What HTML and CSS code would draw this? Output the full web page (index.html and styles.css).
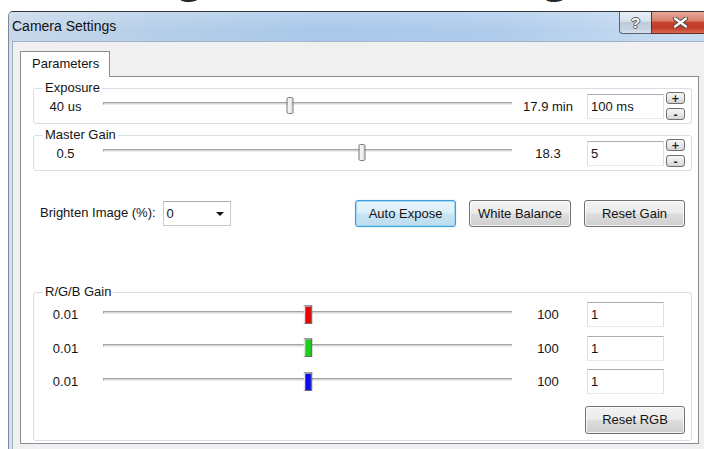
FILE: index.html
```html
<!DOCTYPE html>
<html lang="en">
<head>
<meta charset="utf-8">
<title>Camera Settings</title>
<link rel="stylesheet" href="styles.css">
</head>
<body>
<h1 class="page-heading"><span class="page-heading-text">Editing Camera Settings</span></h1>

<div class="window">
  <div class="titlebar">
    <span class="title">Camera Settings</span>
    <div class="caption-buttons">
      <button class="cap-btn cap-help" type="button">?</button>
      <button class="cap-btn cap-close" type="button" aria-label="Close">
        <svg width="17" height="11" viewBox="0 0 17 11">
          <path d="M3 1.5 L14 9.5 M14 1.5 L3 9.5" stroke="#4a4a4a" stroke-width="4.2" stroke-linecap="round" fill="none"/>
          <path d="M3 1.5 L14 9.5 M14 1.5 L3 9.5" stroke="#ffffff" stroke-width="2.2" stroke-linecap="round" fill="none"/>
        </svg>
      </button>
    </div>
  </div>

  <div class="client">
    <div class="tab-strip">
      <div class="tab is-active">Parameters</div>
    </div>

    <div class="tab-panel">
      <fieldset class="group">
        <legend>Exposure</legend>
        <div class="slider-row">
          <span class="min">40 us</span>
          <div class="slider"><div class="channel"></div><div class="thumb" style="left:45.7%"></div></div>
          <span class="max">17.9 min</span>
          <input class="textbox" type="text" value="100 ms">
          <div class="spin"><button type="button">+</button><button type="button">-</button></div>
        </div>
      </fieldset>

      <fieldset class="group">
        <legend>Master Gain</legend>
        <div class="slider-row">
          <span class="min">0.5</span>
          <div class="slider"><div class="channel"></div><div class="thumb" style="left:63.3%"></div></div>
          <span class="max">18.3</span>
          <input class="textbox" type="text" value="5">
          <div class="spin"><button type="button">+</button><button type="button">-</button></div>
        </div>
      </fieldset>

      <div class="action-row">
        <label class="brighten-label">Brighten Image (%):</label>
        <div class="combo"><span class="combo-value">0</span><span class="combo-arrow"></span></div>
        <div class="action-buttons">
          <button class="btn is-focused" type="button">Auto Expose</button>
          <button class="btn btn-wide" type="button">White Balance</button>
          <button class="btn" type="button">Reset Gain</button>
        </div>
      </div>

      <fieldset class="group group-rgb">
        <legend>R/G/B Gain</legend>
        <div class="slider-row rgb-row">
          <span class="min">0.01</span>
          <div class="slider"><div class="channel"></div><div class="thumb thumb-color thumb-red" style="left:50%"></div></div>
          <span class="max">100</span>
          <input class="textbox" type="text" value="1">
        </div>
        <div class="slider-row rgb-row">
          <span class="min">0.01</span>
          <div class="slider"><div class="channel"></div><div class="thumb thumb-color thumb-green" style="left:50%"></div></div>
          <span class="max">100</span>
          <input class="textbox" type="text" value="1">
        </div>
        <div class="slider-row rgb-row">
          <span class="min">0.01</span>
          <div class="slider"><div class="channel"></div><div class="thumb thumb-color thumb-blue" style="left:50%"></div></div>
          <span class="max">100</span>
          <input class="textbox" type="text" value="1">
        </div>
        <button class="btn btn-reset-rgb" type="button">Reset RGB</button>
      </fieldset>
    </div>
  </div>
</div>
</body>
</html>
```

FILE: styles.css
```css
* { box-sizing: border-box; }

html, body {
  margin: 0;
  padding: 0;
  background: #ffffff;
  overflow: hidden;
}

body {
  width: 704px;
  height: 449px;
  font-family: "Liberation Sans", Arial, sans-serif;
  font-size: 13px;
  color: #141414;
}

.page-heading {
  margin: 0;
  height: 11px;
  padding-left: 49px;
  overflow: hidden;
  font: bold 39px/39px "DejaVu Sans", sans-serif;
  word-spacing: 5px;
  color: #262626;
  white-space: nowrap;
}
.page-heading-text {
  display: block;
  margin-top: -39px;
}

/* ---------- window frame ---------- */
.window {
  margin-left: 8px;
  width: 702px;
  height: 438px;
  border-top: 1px solid #2f3539;
  border-left: 1px solid #7d8998;
  border-top-left-radius: 5px;
  background: #d3e0ee;
  display: flex;
  flex-direction: column;
  overflow: hidden;
}

.titlebar {
  height: 29px;
  flex: none;
  display: flex;
  align-items: flex-start;
  padding-left: 3px;
  background:
    linear-gradient(180deg, rgba(255,255,255,0.18) 0%, rgba(255,255,255,0) 60%),
    linear-gradient(90deg, #c8d8ea 0%, #b6cfe9 20%, #a9c8ea 45%, #b0ccec 70%, #cadef2 100%);
}

.title {
  padding-top: 6px;
  font-size: 14px;
  line-height: 16px;
  color: #101010;
}

.caption-buttons {
  margin-left: auto;
  display: flex;
}

.cap-btn {
  height: 22px;
  margin: 0;
  padding: 0;
  border: 1px solid #59636f;
  border-top: 0;
  display: flex;
  align-items: center;
  justify-content: center;
  font-family: "Liberation Sans", Arial, sans-serif;
}

.cap-help {
  width: 32px;
  border-right: 0;
  border-bottom-left-radius: 4px;
  background: linear-gradient(180deg, #e9eff6 0%, #d6e0ec 45%, #bccadb 50%, #c8d5e4 85%, #d9e4f0 100%);
  font-weight: bold;
  font-size: 15px;
  line-height: 16px;
  color: #ffffff;
  text-shadow: -1px 0 #555, 1px 0 #555, 0 -1px #555, 0 1px #555;
}

.cap-close {
  width: 59px;
  border-color: #6b2b22;
  background: linear-gradient(180deg, #e6a898 0%, #d88470 40%, #c6432f 50%, #c23d29 75%, #d46a52 100%);
}

/* ---------- client area ---------- */
.client {
  flex: 1;
  margin-left: 3px;
  border-top: 1px solid #a2b3c6;
  border-left: 1px solid #9eafc2;
  background: #f0f0f0;
  padding: 9px 0 0 7px;
}

.tab-strip {
  display: flex;
  position: relative;
  z-index: 1;
}

.tab {
  height: 26px;
  margin-bottom: -1px;
  padding: 0 10px 0 11px;
  border: 1px solid #898c95;
  border-bottom: 0;
  background: #ffffff;
  line-height: 24px;
}

.tab-panel {
  width: 679px;
  height: 368px;
  border: 1px solid #898c95;
  background: #ffffff;
  display: flex;
  flex-direction: column;
}

/* ---------- group boxes ---------- */
.group {
  margin: 6px 6px 0 12px;
  padding: 0 0 3px 0;
  border: 1px solid #d5dfe5;
  border-radius: 3px;
  min-width: 0;
}

.group legend {
  margin-left: 9px;
  padding: 0 2px;
  line-height: 10px;
  font-size: 13px;
}

.slider-row {
  height: 28px;
  margin-top: -1px;
  display: flex;
  align-items: center;
}

.min {
  width: 63px;
  text-align: center;
}

.slider {
  position: relative;
  width: 409px;
  height: 28px;
  margin-left: 6px;
}

.channel {
  position: absolute;
  left: 0;
  right: 0;
  top: 10px;
  height: 3px;
  border-top: 1px solid #a3a3a3;
  border-left: 1px solid #a3a3a3;
  border-bottom: 1px solid #ececec;
  background: #d6d6d6;
}

.thumb {
  position: absolute;
  top: 5px;
  width: 7px;
  height: 17px;
  transform: translateX(-50%);
  border: 1px solid #777777;
  border-radius: 2px;
  background: linear-gradient(90deg, #fafafa 0%, #ececec 60%, #d8d8d8 100%);
}

.thumb-color {
  top: 4px;
  width: 9px;
  height: 19px;
  border-radius: 1px;
  border-style: solid;
  border-width: 2px 2px 1px 2px;
  border-color: #9b9b9b #6e6e6e #6e6e6e #e4e4e4;
}
.thumb-red { background: #f20000; }
.thumb-green { background: #14d414; }
.thumb-blue { background: #0c0cf0; }

.max {
  width: 72px;
  text-align: center;
}

.textbox {
  width: 77px;
  height: 25px;
  margin: 0 0 0 3px;
  padding: 0 3px;
  border: 1px solid #dbdfe6;
  border-top-color: #abadb3;
  border-bottom-color: #e3e9ef;
  background: #ffffff;
  font: inherit;
  color: #141414;
  outline: none;
}

.spin {
  width: 19px;
  margin-left: 2px;
  display: flex;
  flex-direction: column;
  gap: 4px;
}

.spin button {
  width: 19px;
  height: 12px;
  margin: 0;
  padding: 0;
  border: 1px solid #6f6f6f;
  border-radius: 3px;
  background: linear-gradient(180deg, #f6f6f6 0%, #e8e8e8 50%, #d4d4d4 100%);
  font: bold 10px/9px "DejaVu Sans", sans-serif;
  color: #222;
}

/* ---------- brighten / action row ---------- */
.action-row {
  margin-top: 29px;
  padding: 0 13px 0 19px;
  display: flex;
  align-items: center;
}

.brighten-label {
  margin-top: -2px;
}

.combo {
  width: 68px;
  height: 25px;
  margin-left: 7px;
  border: 1px solid #c6cad1;
  border-top-color: #abadb3;
  background: #ffffff;
  display: flex;
  align-items: center;
  padding: 0 6px 0 3px;
}

.combo-arrow {
  margin-left: auto;
  width: 0;
  height: 0;
  border-left: 4px solid transparent;
  border-right: 4px solid transparent;
  border-top: 4px solid #111;
}

.action-buttons {
  margin-left: auto;
  display: flex;
  gap: 13px;
}

.btn {
  width: 101px;
  height: 27px;
  margin: 0;
  padding: 0;
  border: 1px solid #707070;
  border-radius: 3px;
  background: linear-gradient(180deg, #f2f2f2 0%, #ebebeb 48%, #dddddd 52%, #cfcfcf 100%);
  box-shadow: inset 0 0 0 1px rgba(255,255,255,0.75);
  font: inherit;
  color: #141414;
}

.btn-wide { width: 102px; }

.btn.is-focused {
  border-color: #3c9fd8;
  background: linear-gradient(180deg, #e8f4fb 0%, #dbeef9 48%, #c9e4f4 52%, #bcdcee 100%);
  box-shadow: inset 0 0 0 1px #9fd7f5, 0 0 1px #7cc3ec;
}

/* ---------- R/G/B group ---------- */
.group-rgb {
  margin-top: 60px;
  padding-bottom: 6px;
  display: flex;
  flex-direction: column;
}

.rgb-row {
  height: 33.5px;
  margin-top: 0;
}
.rgb-row:first-of-type { margin-top: 1px; }

.btn-reset-rgb {
  align-self: flex-end;
  width: 100px;
  height: 28px;
  margin: 7px 6px 0 0;
}
```
